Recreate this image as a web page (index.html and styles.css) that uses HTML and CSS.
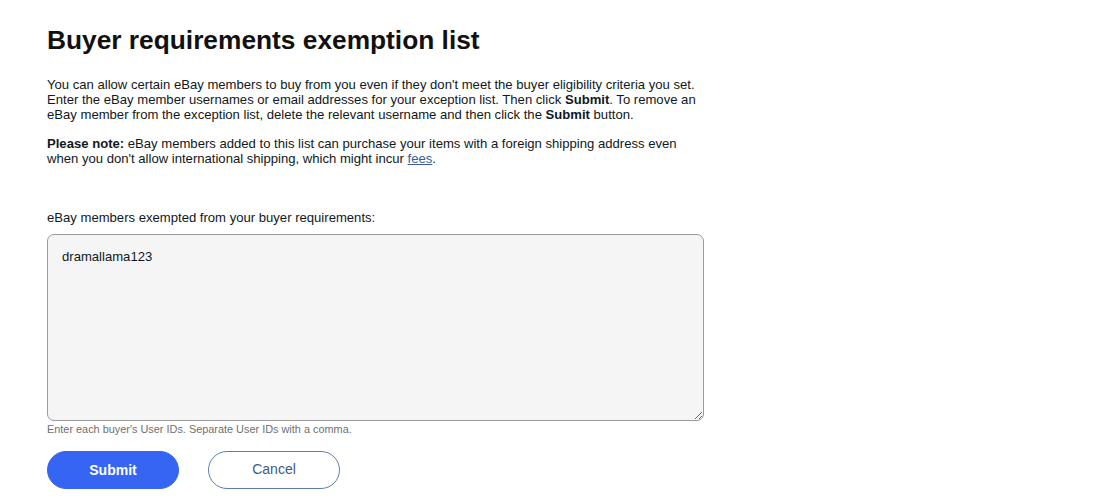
FILE: index.html
```html
<!DOCTYPE html>
<html>
<head>
<meta charset="utf-8">
<link rel="stylesheet" href="styles.css">
</head>
<body>
<main class="page">
  <h1 class="title">Buyer requirements exemption list</h1>
  <p class="intro">You can allow certain eBay members to buy from you even if they don't meet the buyer eligibility criteria you set. Enter the eBay member usernames or email addresses for your exception list. Then click <b>Submit</b>. To remove an eBay member from the exception list, delete the relevant username and then click the <b>Submit</b> button.</p>
  <p class="note"><b>Please note:</b> eBay members added to this list can purchase your items with a foreign shipping address even when you don't allow international shipping, which might incur <a href="#" class="link">fees</a>.</p>
  <form class="form">
    <label class="label" for="members">eBay members exempted from your buyer requirements:</label>
    <textarea id="members" class="field">dramallama123</textarea>
    <div class="hint">Enter each buyer's User IDs. Separate User IDs with a comma.</div>
    <div class="actions">
      <button type="button" class="btn btn-primary">Submit</button>
      <button type="button" class="btn btn-secondary">Cancel</button>
    </div>
  </form>
</main>
</body>
</html>
```
FILE: styles.css
```css
html, body {
  margin: 0;
  padding: 0;
  background: #fff;
}
body {
  font-family: "Liberation Sans", Arial, sans-serif;
  color: #111820;
}
.page {
  padding: 23px 0 0 47px;
  width: 660px;
}
.title {
  font-size: 26.3px;
  font-weight: bold;
  margin: 0 0 20px 0;
  line-height: 34px;
  color: #111;
}
.intro, .note {
  font-size: 13.1px;
  line-height: 15px;
  margin: 0 0 14px 0;
  width: 660px;
}
.note {
  margin-bottom: 0;
}
.link {
  color: #3a5c99;
  text-decoration: underline;
}
.form {
  margin-top: 44px;
}
.label {
  display: block;
  font-size: 13.1px;
  line-height: 15px;
  margin-bottom: 9px;
}
.field {
  display: block;
  box-sizing: border-box;
  width: 657px;
  height: 187px;
  background: #f5f5f5;
  border: 1px solid #9b9b9b;
  border-radius: 7px;
  padding: 14px 14px;
  font-family: "Liberation Sans", Arial, sans-serif;
  font-size: 13.1px;
  color: #111820;
  resize: vertical;
}
.hint {
  font-size: 10.9px;
  color: #707070;
  margin-top: 2px;
  line-height: 12px;
}
.actions {
  display: flex;
  gap: 29px;
  margin-top: 16px;
}
.btn {
  width: 132px;
  height: 38px;
  border-radius: 19px;
  font-family: "Liberation Sans", Arial, sans-serif;
  font-size: 14px;
  cursor: pointer;
}
.btn-primary {
  background: #3665f3;
  border: 1px solid #3665f3;
  color: #fff;
  font-weight: bold;
}
.btn-secondary {
  background: #fff;
  border: 1px solid #5a7fb0;
  color: #3a5c8a;
  padding-bottom: 4px;
}
```
